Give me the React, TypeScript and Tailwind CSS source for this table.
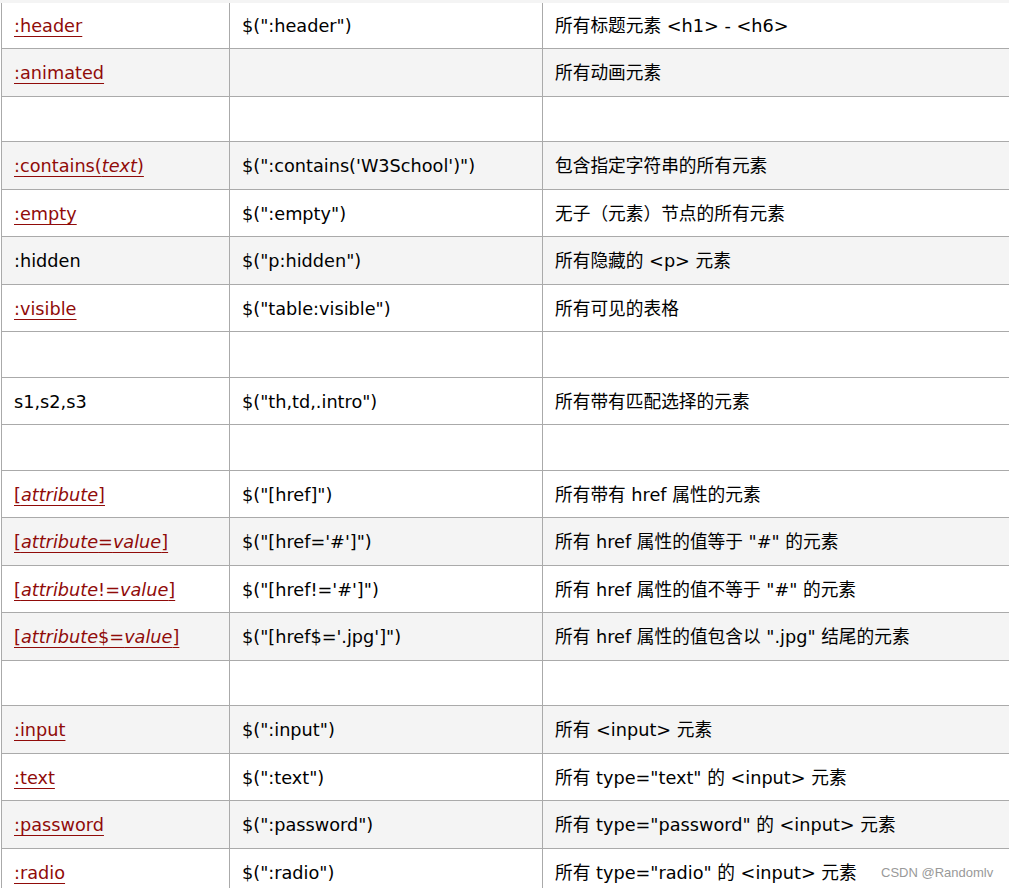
import React from "react";

type Row = {
  c1: React.ReactNode;
  c2: string;
  c3: string;
  bg: string;
  h: string;
};

const Link = ({ children }: { children: React.ReactNode }) => (
  <span className="text-[#900b09] underline decoration-[#900b09] decoration-1 underline-offset-[4px]">
    {children}
  </span>
);

const rows: Row[] = [
  { c1: <Link>:header</Link>, c2: '$(":header")', c3: "所有标题元素 <h1> - <h6>", bg: "bg-white", h: "h-[46px]" },
  { c1: <Link>:animated</Link>, c2: "", c3: "所有动画元素", bg: "bg-[#f4f4f4]", h: "h-[48px]" },
  { c1: "", c2: "", c3: "", bg: "bg-white", h: "h-[45px]" },
  {
    c1: (
      <Link>
        :contains(<i>text</i>)
      </Link>
    ),
    c2: "$(\":contains('W3School')\")",
    c3: "包含指定字符串的所有元素",
    bg: "bg-[#f4f4f4]",
    h: "h-[48px]",
  },
  { c1: <Link>:empty</Link>, c2: '$(":empty")', c3: "无子（元素）节点的所有元素", bg: "bg-white", h: "h-[47px]" },
  { c1: ":hidden", c2: '$("p:hidden")', c3: "所有隐藏的 <p> 元素", bg: "bg-[#f4f4f4]", h: "h-[48px]" },
  { c1: <Link>:visible</Link>, c2: '$("table:visible")', c3: "所有可见的表格", bg: "bg-white", h: "h-[47px]" },
  { c1: "", c2: "", c3: "", bg: "bg-white", h: "h-[46px]" },
  { c1: "s1,s2,s3", c2: '$("th,td,.intro")', c3: "所有带有匹配选择的元素", bg: "bg-white", h: "h-[47px]" },
  { c1: "", c2: "", c3: "", bg: "bg-white", h: "h-[46px]" },
  {
    c1: (
      <Link>
        [<i>attribute</i>]
      </Link>
    ),
    c2: '$("[href]")',
    c3: "所有带有 href 属性的元素",
    bg: "bg-white",
    h: "h-[47px]",
  },
  {
    c1: (
      <Link>
        [<i>attribute</i>=<i>value</i>]
      </Link>
    ),
    c2: "$(\"[href='#']\")",
    c3: '所有 href 属性的值等于 "#" 的元素',
    bg: "bg-[#f4f4f4]",
    h: "h-[48px]",
  },
  {
    c1: (
      <Link>
        [<i>attribute</i>!=<i>value</i>]
      </Link>
    ),
    c2: "$(\"[href!='#']\")",
    c3: '所有 href 属性的值不等于 "#" 的元素',
    bg: "bg-white",
    h: "h-[47px]",
  },
  {
    c1: (
      <Link>
        [<i>attribute</i>$=<i>value</i>]
      </Link>
    ),
    c2: "$(\"[href$='.jpg']\")",
    c3: '所有 href 属性的值包含以 ".jpg" 结尾的元素',
    bg: "bg-[#f4f4f4]",
    h: "h-[48px]",
  },
  { c1: "", c2: "", c3: "", bg: "bg-white", h: "h-[45px]" },
  { c1: <Link>:input</Link>, c2: '$(":input")', c3: "所有 <input> 元素", bg: "bg-[#f4f4f4]", h: "h-[48px]" },
  { c1: <Link>:text</Link>, c2: '$(":text")', c3: '所有 type="text" 的 <input> 元素', bg: "bg-white", h: "h-[47px]" },
  { c1: <Link>:password</Link>, c2: '$(":password")', c3: '所有 type="password" 的 <input> 元素', bg: "bg-[#f4f4f4]", h: "h-[48px]" },
  { c1: <Link>:radio</Link>, c2: '$(":radio")', c3: '所有 type="radio" 的 <input> 元素', bg: "bg-white", h: "h-[48px]" },
];

export default function App() {
  return (
    <div
      className="relative w-[1009px] h-[888px] overflow-hidden bg-white text-black text-[17.7px] leading-[21px]"
      style={{ fontFamily: '"DejaVu Sans", "Noto Sans CJK SC", sans-serif' }}
    >
      <div className="h-[3px] bg-[#f4f4f4]" />
      <div className="pl-[1px]">
        {rows.map((r, i) => (
          <div key={i} className={`flex border-b border-[#aaaaaa] ${r.bg} ${r.h}`}>
            <div className="w-[229px] shrink-0 border-l border-r border-[#aaaaaa] flex items-center pl-[12px] pt-[2px] whitespace-nowrap">
              {r.c1}
            </div>
            <div className="w-[313px] shrink-0 border-r border-[#aaaaaa] flex items-center pl-[12px] pt-[2px] whitespace-nowrap">
              {r.c2}
            </div>
            <div className="flex-1 flex items-center pl-[12px] pt-[2px] whitespace-nowrap">{r.c3}</div>
          </div>
        ))}
      </div>
      <div
        className="absolute left-[881px] top-[865px] text-[13px] leading-[15px] text-[#999999]"
        style={{ fontFamily: '"Liberation Sans", Arial, sans-serif' }}
      >
        CSDN @Randomlv
      </div>
    </div>
  );
}
